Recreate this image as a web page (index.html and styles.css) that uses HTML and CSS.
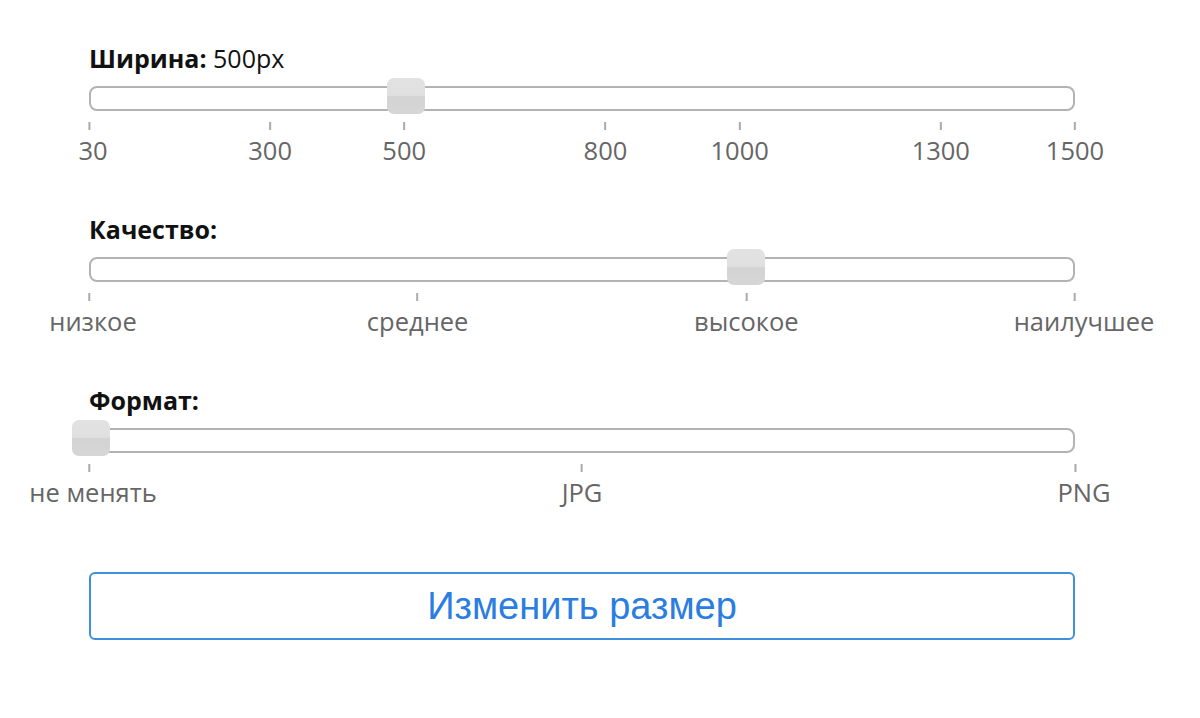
FILE: index.html
```html
<!DOCTYPE html>
<html lang="ru">
<head>
  <meta charset="UTF-8">
  <meta name="viewport" content="width=device-width, initial-scale=1.0">
  <title>Изменить размер</title>
  <link rel="stylesheet" href="styles.css">
</head>
<body>
  <div class="panel">

    <div class="setting">
      <div class="setting-title"><b>Ширина:</b> 500px</div>
      <div class="slider">
        <div class="track"></div>
        <div class="thumb" style="left: 32.15%"></div>
      </div>
      <div class="scale">
        <span class="mark shift-s" style="left: 0%">30</span>
        <span class="mark" style="left: 18.37%">300</span>
        <span class="mark" style="left: 31.97%">500</span>
        <span class="mark" style="left: 52.38%">800</span>
        <span class="mark" style="left: 65.99%">1000</span>
        <span class="mark" style="left: 86.39%">1300</span>
        <span class="mark" style="left: 100%">1500</span>
      </div>
    </div>

    <div class="setting">
      <div class="setting-title"><b>Качество:</b></div>
      <div class="slider">
        <div class="track"></div>
        <div class="thumb" style="left: 66.67%"></div>
      </div>
      <div class="scale">
        <span class="mark shift-s" style="left: 0%">низкое</span>
        <span class="mark" style="left: 33.33%">среднее</span>
        <span class="mark" style="left: 66.67%">высокое</span>
        <span class="mark shift-l" style="left: 100%">наилучшее</span>
      </div>
    </div>

    <div class="setting">
      <div class="setting-title"><b>Формат:</b></div>
      <div class="slider">
        <div class="track"></div>
        <div class="thumb" style="left: 0.2%"></div>
      </div>
      <div class="scale">
        <span class="mark shift-s" style="left: 0%">не менять</span>
        <span class="mark" style="left: 50%">JPG</span>
        <span class="mark shift-l" style="left: 100%">PNG</span>
      </div>
    </div>

    <button class="resize-btn">Изменить размер</button>
  </div>
</body>
</html>
```

FILE: styles.css
```css
body {
  margin: 0;
  background-color: #fff;
  font-family: 'Open Sans', 'Noto Sans', sans-serif;
}
.panel {
  width: 986px;
  padding: 43px 0 0 89px;
}
.setting {
  margin-bottom: 49px;
}
.setting-title {
  font-size: 25px;
  line-height: 30px;
  color: #111;
  margin-bottom: 13px;
}
.setting-title b {
  font-weight: 700;
}
.slider {
  position: relative;
  height: 25px;
}
.track {
  height: 25px;
  box-sizing: border-box;
  border: 2px solid #b3b3b3;
  border-radius: 8px;
  background-color: #fff;
}
.thumb {
  position: absolute;
  top: -8px;
  width: 38px;
  height: 36px;
  margin-left: -19px;
  border-radius: 7px;
  background: linear-gradient(to bottom, #e2e2e2 0%, #e0e0e0 48%, #d3d3d3 52%, #d6d6d6 100%);
}
.scale {
  position: relative;
  height: 54px;
}
.mark {
  position: absolute;
  top: 11px;
  transform: translateX(-50%);
  padding-top: 13px;
  font-size: 25.5px;
  line-height: 30px;
  color: #666;
  white-space: nowrap;
}
.mark::before {
  content: "";
  position: absolute;
  top: 0;
  left: 50%;
  width: 2px;
  height: 8px;
  margin-left: -1px;
  background-color: #aaa;
}
/* some labels sit a little right of their tick */
.shift-s {
  transform: translateX(calc(-50% + 4px));
}
.shift-s::before {
  margin-left: -5px;
}
.shift-l {
  transform: translateX(calc(-50% + 9px));
}
.shift-l::before {
  margin-left: -10px;
}
.resize-btn {
  display: block;
  width: 986px;
  height: 68px;
  margin-top: 65px;
  background-color: #fff;
  border: 2px solid #3f8fdc;
  border-radius: 6px;
  color: #2a7de1;
  font-family: 'Liberation Sans', Arial, sans-serif;
  font-size: 38px;
  cursor: pointer;
}
.resize-btn:hover {
  background-color: #f4f9ff;
}
```
